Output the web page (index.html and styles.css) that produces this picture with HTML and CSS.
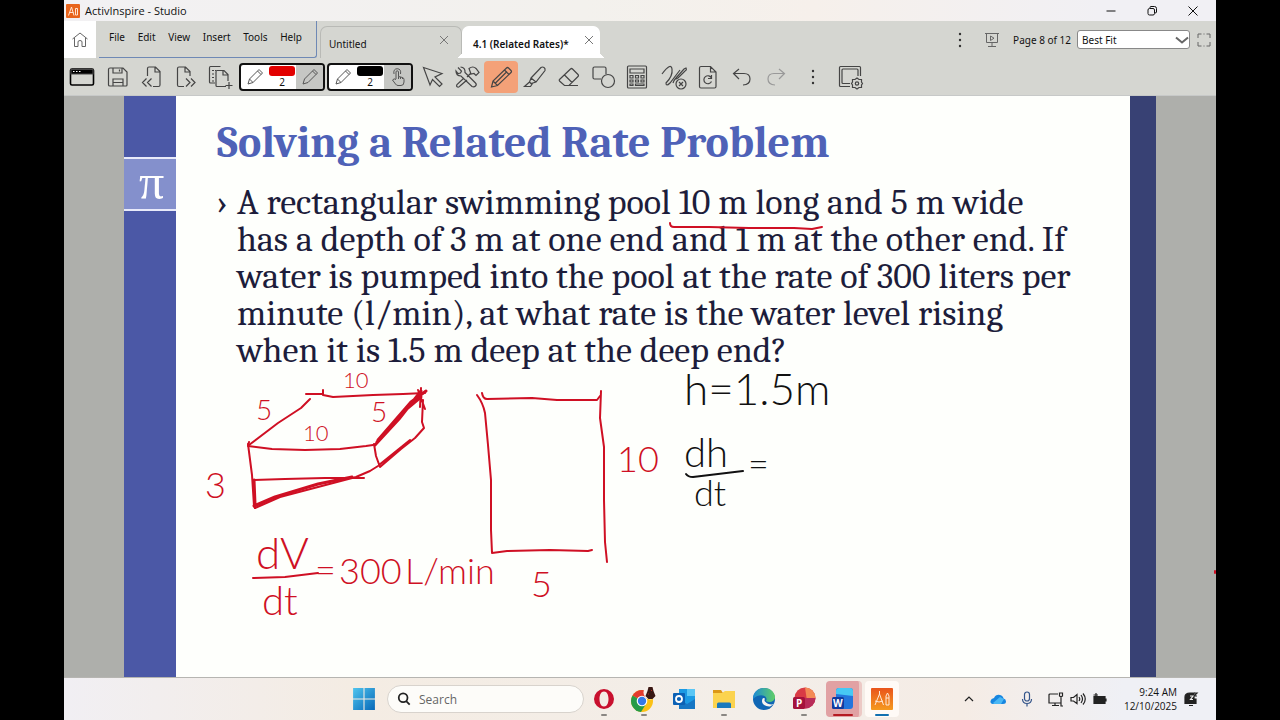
FILE: index.html
```html
<!DOCTYPE html>
<html lang="en">
<head>
<meta charset="utf-8">
<title>ActivInspire - Studio</title>
<link rel="stylesheet" href="styles.css">
</head>
<body>
<div class="window">
  <header class="titlebar">
    <svg class="app-logo" viewBox="0 0 14 14"><rect width="14" height="14" rx="1" fill="#e8641b"/><path d="M2.5 11.5 5.5 3l2.500 8.500M3.500 8.500h4M9.500 11V4.500h2V11z" fill="none" stroke="#ffe3cf"/></svg>
    <span class="app-name">ActivInspire - Studio</span>
    <div class="window-buttons">
      <button aria-label="Minimize"><svg viewBox="0 0 12 12"><path d="M1.500 6h9"/></svg></button>
      <button aria-label="Restore"><svg viewBox="0 0 12 12"><rect x="2" y="3.500" width="6.500" height="6.500" rx="1.500"/><path d="M4 3V2.500Q4 1.500 5 1.500h3.500q2 0 2 2V7q0 1-1.500 1"/></svg></button>
      <button aria-label="Close"><svg viewBox="0 0 12 12"><path d="m1.500 1.500 9 9m0-9-9 9"/></svg></button>
    </div>
  </header>

  <div class="tabrow">
    <button class="home" aria-label="Home"><svg viewBox="0 0 18 18"><path d="M1.500 8 9 2l7.500 6M3.500 7v8.500h3.500V11q0-1.500 2-1.500t2 1.500v4.500h3.500V7"/></svg></button>
    <nav class="menu">
      <button>File</button><button>Edit</button><button>View</button><button>Insert</button><button>Tools</button><button>Help</button>
    </nav>
    <div class="tabs">
      <div class="tab"><span>Untitled</span><button aria-label="Close Untitled"><svg viewBox="0 0 12 12"><path d="m2 2 8 8m0-8-8 8"/></svg></button></div>
      <div class="tab current"><span>4.1 (Related Rates)*</span><button aria-label="Close 4.1"><svg viewBox="0 0 12 12"><path d="m2 2 8 8m0-8-8 8"/></svg></button></div>
    </div>
    <div class="view-tools">
      <button aria-label="More"><svg viewBox="0 0 18 18"><g class="solid"><circle cx="9" cy="3" r="1.200"/><circle cx="9" cy="9" r="1.200"/><circle cx="9" cy="15" r="1.200"/></g></svg></button>
      <button class="present" aria-label="Present"><svg viewBox="0 0 18 18"><path d="M2 2.500h14M3.500 3v8.500h11V3M9 12v3.500M5 15.500h8M7.500 5v4.500L11 7.200z"/></svg></button>
      <span class="page-count">Page 8 of 12</span>
      <div class="zoom-box">
        <select aria-label="Zoom"><option>Best Fit</option></select>
        <svg class="chevron" viewBox="0 0 14 8"><path d="m1 1.500 6 5 6-5"/></svg>
      </div>
      <button class="full" aria-label="Full screen"><svg viewBox="0 0 14 14"><path d="M1 5V1h3.500M9.500 1H13v4M13 9v4H9.500M4.500 13H1V9M6.500 1h1M6.500 13h1"/></svg></button>
    </div>
  </div>

  <div class="toolbar">
    <div class="tool-group first">
      <button aria-label="Desktop"><svg viewBox="0 0 28 28"><rect x="2.500" y="6" width="23" height="16" rx="1.500" stroke="#000" stroke-width="1.600" fill="none"/><path d="M3 6.500h22V11H3z" fill="#000"/><path d="M5 8.500h1.500m1.500 0h1.500m1.500 0h1.500" stroke="#fff"/></svg></button>
    </div>
    <div class="tool-group">
      <button aria-label="Save"><svg viewBox="0 0 28 28"><path d="M6 5h13l4 4v13q0 1-1 1H6q-1.500 0-1.500-1V6.500Q4.500 5 6 5zM9 5v5h9V5M9 23v-7h10v7M9 19.500h10M15.500 6.500v2"/></svg></button>
      <button aria-label="Previous page"><svg viewBox="0 0 28 28"><path d="M9.500 13V5.500Q9.500 4 11 4h6.500L22 8.500V22q0 1.500-1.500 1.500H15M17 4v5h5M8.500 15.500l-4 4 4 4m5-8-4 4 4 4"/></svg></button>
      <button aria-label="Next page"><svg viewBox="0 0 28 28"><path d="M12 23.500H7Q5.500 23.500 5.500 22V5.500Q5.500 4 7 4h6.500L18 8.500V13M13 4v5h5M14 15.500l4 4-4 4m5-8 4 4-4 4"/></svg></button>
      <button aria-label="Add page"><svg viewBox="0 0 28 28"><path d="M9 20H4.500q-1 0-1-1V5q0-1.500 1-1.500h10M20 23.500h-9q-1 0-1-1V9q0-1.500 1-1.500h7l4 4V18M17 7.500V12h5M23 19v7M19.500 22.500h7"/><path d="M6 7.500h4M6 11h2M6 14.500h2M6 18h2" stroke-dasharray="2 1"/></svg></button>
    </div>

    <div class="pen-card">
      <button class="pen" aria-label="Left pen"><svg viewBox="0 0 20 20"><path d="m3 17 1.500-5L14 2.500 17.500 6 8 15.500zM4.500 12 8 15.500M12.500 4 16 7.500"/></svg></button>
      <div class="swatch"><i class="ink-red"></i><span>2</span></div>
      <button class="pen shaded" aria-label="Right pen"><svg viewBox="0 0 20 20"><path d="m3 17 1.500-5L14 2.500 17.500 6 8 15.500zM12.500 4 16 7.500"/></svg></button>
    </div>
    <div class="pen-card">
      <button class="pen" aria-label="Pen"><svg viewBox="0 0 20 20"><path d="m3 17 1.500-5L14 2.500 17.500 6 8 15.500zM4.500 12 8 15.500M12.500 4 16 7.500"/></svg></button>
      <div class="swatch"><i class="ink-black"></i><span>2</span></div>
      <button class="pen shaded" aria-label="Touch"><svg viewBox="0 0 20 20"><path d="M8 12V5q0-1.200 1.200-1.200T10.500 5v4.500l4 1q1.500.5 1.500 2V15q0 3.500-3 3.500h-3q-1.500 0-2.500-1.500l-3-4q1.500-2 3.500-.5M10.500 9.500v2.500m2-2v2m2-1.500v1.500M6 7Q5 2 9.200 1.700 13.500 2 12.500 7"/></svg></button>
    </div>

    <div class="tool-group tight">
      <button aria-label="Select"><svg viewBox="0 0 28 28"><path d="m4.500 4.500 18.500 6-7 3.500 7 7-2.500 2.500-7-7L11 22z"/></svg></button>
      <button aria-label="Tools"><svg viewBox="0 0 28 28"><path d="M5 4.500 8.500 8l-1 2-2.500.5L3 8q0 5 5 5l11 10.500q2 1 3.500-.5t0-3L12 9.500q.5-5-4.500-5.500M16 5.500q4-3 7 0l3 4-3 3-2-2-3 .5zM17.500 10.500 14 14M11 15l-7 6.500q-1 2 .5 2.500t2.500-1l7-6"/></svg></button>
      <button class="active" aria-label="Pen"><svg viewBox="0 0 28 28"><path d="M4.500 24 6 18 19.500 5q1-1 2 0L24 7.500q1 1 0 2L10.500 22.500zM6 18l4.500 4.500M17.500 7l4.500 4.500M8.500 20 20 8.500"/></svg></button>
      <button aria-label="Highlighter"><svg viewBox="0 0 28 28"><path d="m10 15 10-10.500q1.500-1 3 0t1 3L15 19l-5 1.500L8.500 19zM10 15l5 4M8.500 19l-5 4.500h6l2-3"/></svg></button>
      <button aria-label="Eraser"><svg viewBox="0 0 28 28"><path d="M4.500 16.500 15.500 6q1-1 2 0l5.500 5.500q1 1 0 2L14 22.500H9.500l-5-4.500q-.7-1 0-1.500zM9.500 12l7.500 7.500M9.500 22.500H23"/></svg></button>
      <button aria-label="Shapes"><svg viewBox="0 0 28 28"><path d="M12 16H5.500Q4 16 4 14.500v-9Q4 4 5.500 4h10Q17 4 17 5.500V11"/><circle cx="19" cy="18" r="6.500"/></svg></button>
      <button aria-label="Calculator"><svg viewBox="0 0 28 28"><path d="M5.500 3h17q1 0 1 1v20q0 1-1 1h-17q-1 0-1-1V4q0-1 1-1zM7 6h14v4H7zM7 12.500h3v2.500H7zm5.500 0h3v2.500h-3zm5.500 0h3v2.500h-3zM7 17h3v2H7zm5.500 0h3v2h-3zm5.500 0h3v2h-3zM7 21h3v1.500H7zm5.500 0H21v1.500h-8.500z"/></svg></button>
    </div>
    <div class="tool-group tight">
      <button aria-label="Clear annotations"><svg viewBox="0 0 28 28"><path d="M2 11Q11-1 12 6T6 20q0 4 4 0L20 7M13 20q1-3 3-5l8-9 2-1q1 2-1 3l-7 7-2 1"/><circle cx="21" cy="21" r="5"/><path d="m19 19 4 4m0-4-4 4"/></svg></button>
      <button aria-label="Reset page"><svg viewBox="0 0 28 28"><path d="M7 3.500h9.500L22 9v14.500q0 1.500-1.500 1.500H7q-1.500 0-1.500-1.500V5Q5.500 3.500 7 3.500zM16.500 4v5H22M17.500 15a4 4 0 1 0 0 3.500M17.500 12v3.500H14"/></svg></button>
      <button aria-label="Undo"><svg viewBox="0 0 28 28"><path d="M11 6 5.500 10.500 11 16M6 10.500h10q6 0 6 5.500t-7 6"/></svg></button>
      <button class="dim" aria-label="Redo"><svg viewBox="0 0 28 28"><path d="m17 6 5.500 4.500L17 16M22 10.500H12q-6 0-6 5.500t7 6"/></svg></button>
    </div>
    <div class="tool-group tight">
      <button aria-label="More tools"><svg viewBox="0 0 28 28"><g class="solid"><circle cx="14" cy="8" r="1.200"/><circle cx="14" cy="14" r="1.200"/><circle cx="14" cy="20" r="1.200"/></g></svg></button>
    </div>
    <div class="tool-group tight">
      <button aria-label="Customize"><svg viewBox="0 0 28 28"><path d="M14 23.500H4.500q-1 0-1-1v-18q0-1 1-1h19q1 0 1 1V13M14 20.500H7q-1 0-1-1V7q0-1 1-1h14q1 0 1 1v6M21 15l2 1.500h2.500V19l1 1.500-1 1.500v2.500H23L21 26l-2-1.500h-2.500V22l-1-1.500 1-1.500v-2.500H19z"/><circle cx="21" cy="20.500" r="1.700"/></svg></button>
    </div>
  </div>

  <main class="canvas">
    <aside class="strip"><div class="pi">π</div></aside>
    <section class="slide">
      <h1>Solving a Related Rate Problem</h1>
      <ul>
        <li>A rectangular swimming pool 10 m long and 5 m wide<br>has a depth of 3 m at one end and 1 m at the other end. If<br>water is pumped into the pool at the rate of 300 liters per<br>minute (l/min), at what rate is the water level rising<br>when it is 1.5 m deep at the deep end?</li>
      </ul>
    </section>
    <aside class="strip-right"></aside>
    <svg class="ink" viewBox="64 96 1152 581" preserveAspectRatio="xMinYMin meet">
      <g class="red-ink">
        <path d="M670 223q0 4 4 4l35 0 40 1 45 0 18 1 10-2"/>
        <path d="M306 394h16m1-4 0 5 10 2 40-2 30-1 22-1"/>
        <path d="M310 399 301 408 278 423 249 445"/>
        <path d="M249 442 248 446 272 449 305 450 340 449 366 446 373 445"/>
        <path d="M248 444 252 475 254 506 255 508"/>
        <path d="M253 480 285 479 325 478 364 478"/>
        <path d="M255 508 280 497 318 487 356 477 370 471 378 466"/>
        <path class="bold" d="M254 506 275 497 318 484 352 477M254 480 255 504"/>
        <path class="bold" d="M375 445 399 419 421 391M377 442 403 412 421 397M378 440 411 402 426 391"/>
        <path d="M374 444 376 456 380 467 401 449 415 438 424 428 422 422 423 400M418 390 425 409M421 388 420 407M379 465 410 440"/>
        <path d="M477 395q6 8 8 18l3 32 3 35 0 50 1 23 15-2 43-1 38 1 4-1"/>
        <path d="M482 393q1 6 5 6l45-1 25 2 40 0 3-4"/>
        <path d="M601 391 600 418 604 447 604 500 605 542 607 562"/>
        <path d="M253 578 285 577 318 573"/>
        <path d="M1215 571v2"/>
      </g>
      <g class="black-ink">
        <path d="M686 474q2 3 7 3l50-6"/>
      </g>
      <g class="red-note">
        <text class="t22" x="343" y="388">10</text>
        <text class="t28" x="256" y="420">5</text>
        <text class="t28" x="371" y="422">5</text>
        <text class="t22" x="303" y="441">10</text>
        <text class="t36" x="205" y="498">3</text>
        <text class="t36" x="617" y="472">10</text>
        <text class="t36" x="531" y="597">5</text>
        <text class="t44" x="256" y="569">dV</text>
        <text class="t40" x="262" y="615">dt</text>
        <text class="t36" x="315" y="583">=</text>
        <text class="t36" x="339" y="584">300</text>
        <text class="t36" x="405" y="584">L/min</text>
      </g>
      <g class="black-note">
        <text class="t44" x="684" y="405">h=1.5m</text>
        <text class="t40" x="684" y="467">dh</text>
        <text class="t36" x="694" y="506">dt</text>
        <text class="t36" x="748" y="477">=</text>
      </g>
    </svg>
  </main>

  <footer class="taskbar">
    <button class="start" aria-label="Start"><svg viewBox="0 0 22 22"><defs><linearGradient id="win" x2="1" y2="1"><stop stop-color="#4fc4ee"/><stop offset="1" stop-color="#0768b8"/></linearGradient></defs><path fill="url(#win)" d="M1 1h9.500v9.500H1zm10.500 0H21v9.500h-9.500zM1 11.500h9.500V21H1zm10.500 0H21V21h-9.500z"/></svg></button>
    <label class="search"><svg viewBox="0 0 16 16"><circle cx="7" cy="6.500" r="5"/><path d="m10.500 10.500 4 4"/></svg><input type="text" placeholder="Search" aria-label="Search"></label>
    <div class="apps">
      <button class="running" aria-label="Opera"><svg viewBox="0 0 24 24"><path fill="#c8102e" fill-rule="evenodd" d="M12 2a10 10 0 1 0 0 20 10 10 0 0 0 0-20zm0 2.500c3 0 4.500 3.500 4.500 7.500s-1.500 7.500-4.500 7.500S7.500 16 7.500 12 9 4.500 12 4.500z"/></svg></button>
      <button class="running chrome" aria-label="Chrome"><svg viewBox="0 0 28 28"><circle cx="12" cy="16" r="11" fill="#fbc116"/><path d="M12 16 2.500 10.500A11 11 0 0 1 21.500 10.500z" fill="#e33b2e"/><path d="M12 16 2.500 10.500A11 11 0 0 0 11 27L16 19z" fill="#269b48"/><circle cx="12" cy="16" r="5.300" fill="#fff"/><circle cx="12" cy="16" r="4.200" fill="#3479e8"/><circle cx="20.500" cy="7.500" r="7" fill="#f7efe9"/><path d="M18.500 2h4l1 4 2 5-3 3h-4l-3-3 2-5z" fill="#391713"/><path d="M18 9h1m2-4 1 1" stroke="#b12b24"/></svg></button>
      <button aria-label="Outlook"><svg viewBox="0 0 24 24"><path d="M7 2h16v19H7z" fill="#1b9ae4"/><path d="M15 2h8v7h-8z" fill="#5ac6f5"/><path d="M7 12l8 5 8-5v10H7z" fill="#1676c4"/><rect x="1" y="6" width="12" height="12" rx="1" fill="#0b61b5"/><circle cx="7" cy="12" r="3" fill="none" stroke="#fff" stroke-width="1.800"/></svg></button>
      <button class="running" aria-label="Files"><svg viewBox="0 0 24 24"><path d="M1 3h8l2 3H1z" fill="#dc9817"/><path d="M1 6h9l3-2h10v17H1z" fill="#fbd34f"/><path d="M5 21v-4q0-1.500 1.500-1.500h11Q19 15.500 19 17v4z" fill="#1879be"/></svg></button>
      <button aria-label="Edge"><svg viewBox="0 0 24 24"><defs><linearGradient id="edge" x2="1"><stop stop-color="#1c8ad6"/><stop offset="1" stop-color="#61cf66"/></linearGradient></defs><circle cx="12" cy="12" r="11" fill="#0f66b4"/><path d="M1 12C1 5 6 1 12 1c7 0 11 5 11 9 0 5-6 6-9 4 3-5-6-9-13-2z" fill="url(#edge)"/><path d="M11 11c-3 4 1 9 7 8.500l4-2.500c-3 1-7 0-9-2.500q-1-1 0-3z" fill="#f5f2ee"/></svg></button>
      <button class="running" aria-label="PowerPoint"><svg viewBox="0 0 24 24"><circle cx="13" cy="11" r="10.500" fill="#d93b45"/><path d="M13 .500A10.500 10.500 0 0 1 23.500 11L15 14z" fill="#f38a55"/><path d="M13 11 23.500 11A10.500 10.500 0 0 1 13 21.500z" fill="#b82c59"/><rect x="1" y="10" width="12" height="12" rx="1.500" fill="#a5123b"/><text x="4" y="20">P</text></svg></button>
      <button class="word" aria-label="Word"><svg viewBox="0 0 24 24"><rect x="5" y="1" width="17" height="21" rx="3" fill="#2375dc"/><path d="M5 7V4q0-3 3-3h11q3 0 3 3v5z" fill="#46c8f4"/><rect x="1" y="10" width="12" height="12" rx="1.500" fill="#123b9f"/><text x="2" y="20">W</text></svg></button>
      <button class="studio" aria-label="ActivInspire"><svg viewBox="0 0 24 24"><defs><linearGradient id="studio" x2="0" y2="1"><stop stop-color="#e9541b"/><stop offset="1" stop-color="#f59a1f"/></linearGradient></defs><rect x="1" y="1" width="22" height="22" rx="1" fill="url(#studio)"/><path d="M5 18 9.500 7l4 11M5 14q4 2 8 0M9.500 4v3M16 9l1.500-3L19 9v9h-3zM16 11h3" fill="none" stroke="#ffe9d8"/></svg></button>
    </div>
    <div class="tray">
      <button aria-label="Hidden icons"><svg viewBox="0 0 18 18"><path d="m5 11 4-4 4 4"/></svg></button>
      <button aria-label="OneDrive"><svg viewBox="0 0 18 18"><path d="M4 14q-3-.5-2.500-3T5 8q2-4 6-3 3 .5 3.500 3.500Q17 9 17 11.500T14 14z" fill="#1786e0" stroke="none"/><path d="m4 13 7-6 4 2-3 5H5z" fill="#49b7f5" stroke="none"/></svg></button>
      <button class="mic" aria-label="Microphone"><svg viewBox="0 0 18 18"><rect x="6.500" y="2" width="5" height="9" rx="2.500"/><path d="M4.500 9q0 4.500 4.500 4.500T13.500 9M9 13.500v3"/></svg></button>
      <div class="status">
        <svg viewBox="0 0 18 18"><path d="M11 4H3q-1 0-1 1v8h12v-3M5 15.500h7M8 13v2.500M12.500 3h3v3l-1.500 1-1.500-1zM14 7v9h2"/></svg>
        <svg viewBox="0 0 18 18"><path d="M2 7.500h2.500L8 4.500v9L4.500 11H2zM10 7q1.500 2 0 4m2-6q3 4 0 8m2-9.500q4.500 5.500 0 11"/></svg>
        <svg viewBox="0 0 18 18"><path d="M3 6.500h11v7H3zM15 8.500v3" fill="#222"/><path d="M5 3v4M2.500 5H7"/></svg>
      </div>
      <div class="clock"><span>9:24 AM</span><span>12/10/2025</span></div>
      <button aria-label="Notifications"><svg viewBox="0 0 18 18"><path d="M3 13.500V7q0-4 5-4h4v6h2v4.500z" fill="#222"/><path d="M7 15.500h4M12 3h3l-3 3h3"/><path d="M8 6h3L8.500 9.500H11" stroke="#eee"/></svg></button>
    </div>
  </footer>
</div>
</body>
</html>
```
FILE: styles.css
```css
* { box-sizing: border-box; }
body {
  margin: 0;
  padding: 0 5%;
  background: #000;
  color: #111;
  font-family: "Noto Sans", "Open Sans", sans-serif;
  font-size: 10px;
}
button {
  display: flex;
  align-items: center;
  justify-content: center;
  margin: 0;
  padding: 0;
  border: 0;
  background: none;
  color: inherit;
  font: inherit;
}
svg { display: block; }

.window { display: flex; flex-direction: column; min-height: 100vh; }

.titlebar {
  display: flex;
  align-items: center;
  height: 21px;
  background: linear-gradient(90deg, #f2f1f3, #f3f1ed 45%, #f6f0eb 65%, #f1f0f4 90%);
}
.app-logo { width: 14px; height: 14px; margin: 0 5px 0 2px; }
.app-name { font-family: "Open Sans", sans-serif; font-size: 11px; }
.window-buttons { display: flex; gap: 29px; margin-left: auto; padding-right: 17px; }
.window-buttons svg { width: 12px; height: 12px; fill: none; stroke: #111; }

.tabrow { display: flex; height: 37px; background: #d5d6d1; }
.home { width: 32px; background: #fff; }
.home svg, .view-tools svg { width: 18px; height: 18px; fill: none; stroke: #666; }
.menu {
  display: flex;
  justify-content: space-between;
  align-items: center;
  width: 218px;
  margin: 0 3px;
  padding: 0 14px 4px 10px;
  border-right: 1px solid #6f89b5;
  border-bottom: 1px solid #6f89b5;
  border-radius: 0 0 3px 0;
}
.tabs { display: flex; align-items: flex-end; }
.tab {
  display: flex;
  justify-content: space-between;
  width: 142px;
  height: 32px;
  align-items: center;
  padding: 0 11px 0 8px;
  border: 1px solid #b9bab6;
  border-bottom: 0;
  border-radius: 7px 7px 0 0;
}
.tab span { padding-top: 2px; }
.tab svg { width: 12px; height: 12px; margin-bottom: 6px; fill: none; stroke: #777; }
.tab.current { position: relative; width: 138px; padding: 0 4px 0 10px; border-color: #fff; background: #fff; font-weight: 600; }
.tab.current::before, .tab.current::after {
  content: "";
  position: absolute;
  bottom: 0;
  width: 5px;
  height: 6px;
}
.tab.current::before { right: 100%; background: linear-gradient(to bottom right, transparent 50%, #fff 50%); }
.tab.current::after { left: 100%; background: linear-gradient(to bottom left, transparent 50%, #fff 50%); }
.view-tools { display: flex; align-items: center; margin-left: auto; padding-right: 5px; }
.present { margin: 0 12px 0 14px; }
.page-count { margin-right: 6px; }
.zoom-box { position: relative; margin-right: 7px; }
.zoom-box select {
  display: block;
  width: 113px;
  height: 19px;
  padding: 0 4px;
  border: 1px solid #888;
  border-radius: 3px;
  background: #fff;
  color: #111;
  font: inherit;
  appearance: none;
}
.view-tools .chevron { position: absolute; right: 1px; top: 6px; width: 14px; height: 8px; stroke-width: 2; }
.view-tools .full svg { width: 14px; height: 14px; }
.solid { fill: #333; stroke: none; }

.toolbar { display: flex; align-items: center; height: 38px; background: #d5d6d1; border-bottom: 1px solid #c7c9c8; }
.tool-group { display: flex; margin-left: 2px; }
.tool-group.first { margin-left: 1px; }
.tool-group.tight { margin-left: 3px; }
.tool-group button { width: 34px; height: 32px; border-radius: 4px; }
.tool-group svg { width: 28px; height: 28px; fill: none; stroke: #454545; stroke-width: 1.2; }
.tool-group .dim svg { stroke: #999; }
.tool-group .active { background: #f4a178; }
.pen-card {
  display: flex;
  width: 86px;
  height: 28px;
  margin-left: 2px;
  overflow: hidden;
  border: 2px solid #111;
  border-radius: 4px;
  background: #fff;
}
.pen { flex: 1; }
.pen svg { width: 20px; height: 20px; fill: none; stroke: #555; }
.shaded { background: #c6c7c4; }
.swatch { display: flex; flex-direction: column; align-items: center; width: 28px; padding-top: 1px; line-height: 13px; }
.swatch i { width: 26px; height: 10px; border-radius: 3px; }
.ink-red { background: #e20000; }
.ink-black { background: #000; }

.canvas { position: relative; display: flex; flex: 1; padding: 0 60px; background: #aeafab; }
.strip { width: 52px; padding-top: 61px; background: #4b58a6; }
.pi {
  height: 54px;
  padding-left: 3px;
  border: solid #e8eafa;
  border-width: 2px 0;
  background: #8490cc;
  color: #fff;
  font: 50px/46px "Liberation Serif", serif;
  text-align: center;
}
.strip-right { width: 26px; background: #384174; }
.slide { flex: 1; padding: 22px 20px 0 41px; background: #fefffc; font-family: Cambria, Caladea, "Liberation Serif", serif; }
.slide h1 { margin: 0 0 16px; color: #4f62b7; font-size: 44px; line-height: 50px; white-space: nowrap; }
.slide ul { margin: 0; padding: 0; list-style: none; }
.slide li { position: relative; padding-left: 20px; color: #1d1d3b; font-size: 36px; line-height: 37px; white-space: nowrap; }
.slide li::before { content: "›"; position: absolute; left: 0; }
.ink { position: absolute; top: 0; left: 0; width: 100%; pointer-events: none; }
.ink path { fill: none; stroke-width: 2; stroke-linecap: round; stroke-linejoin: round; }
.ink .bold { stroke-width: 3; }
.red-ink { stroke: #cf1024; }
.black-ink { stroke: #111; }
.red-note, .black-note { font-family: Lato, sans-serif; font-weight: 300; }
.red-note { fill: #cf1024; }
.black-note { fill: #111; }
.t22 { font-size: 22px; }
.t28 { font-size: 28px; }
.t36 { font-size: 36px; }
.t40 { font-size: 40px; }
.t44 { font-size: 44px; }

.taskbar {
  display: flex;
  align-items: center;
  height: 43px;
  padding-left: 288px;
  border-top: 1px solid #b6b5b1;
  background: linear-gradient(90deg, #f1eff3, #f4ece3 25%, #f3eee9 60%, #f5ece5 78%, #eff0f5 92%);
}
.start svg { width: 24px; height: 24px; }
.search {
  display: flex;
  align-items: center;
  gap: 8px;
  width: 197px;
  height: 28px;
  margin-left: 11px;
  padding: 0 9px;
  border: 1px solid #d8d3cd;
  border-radius: 14px;
  background: #fdfcf9;
}
.search svg { width: 16px; height: 16px; fill: none; stroke: #222; stroke-width: 2; }
.search input { width: 100%; min-width: 0; padding: 0; border: 0; outline: 0; background: none; font: 12px "Open Sans", sans-serif; }
.search input::placeholder { color: #666; }
.apps { display: flex; }
.apps button { position: relative; width: 40px; height: 36px; }
.apps svg { width: 24px; height: 24px; }
.apps .chrome svg { width: 28px; height: 28px; }
.apps text { fill: #fff; font: bold 10px "Open Sans", sans-serif; }
.apps .running::after, .apps .word::after, .apps .studio::after {
  content: "";
  position: absolute;
  bottom: 1px;
  width: 6px;
  height: 2px;
  border-radius: 1px;
  background: #8a8783;
}
.apps .word { width: 36px; margin: 0 2px; border-right: 3px solid #ecc9c5; border-radius: 4px; background: #e1a1a3; }
.apps .word::after { width: 20px; background: #b41a22; }
.apps .studio { width: 34px; margin: 0 1px; border-radius: 4px; background: #fffaf6; }
.apps .studio::after { width: 14px; background: #1270b0; }
.tray { display: flex; align-items: center; gap: 11px; margin-left: auto; padding-right: 16px; }
.tray svg { width: 18px; height: 18px; fill: none; stroke: #222; stroke-width: 1.2; }
.tray .mic svg { stroke: #34558a; }
.status { display: flex; gap: 4px; }
.clock { display: flex; flex-direction: column; width: 57px; margin-right: -6px; font-family: "Open Sans", sans-serif; font-size: 10px; line-height: 14px; text-align: right; }
```
